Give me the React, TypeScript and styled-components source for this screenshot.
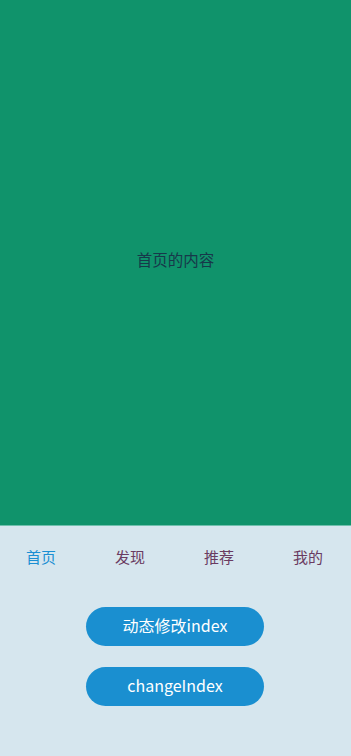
import React, { useState } from "react";
import styled, { createGlobalStyle } from "styled-components";

const tabs = ["首页", "发现", "推荐", "我的"];

const App: React.FC = () => {
  const [index, setIndex] = useState(0);

  return (
    <>
      <GlobalStyle />
      <Page>
        <Content>{tabs[index]}的内容</Content>
        <TabBar>
          {tabs.map((t, i) => (
            <Tab key={t} $active={i === index} onClick={() => setIndex(i)}>
              {t}
            </Tab>
          ))}
        </TabBar>
        <Actions>
          <PillButton onClick={() => setIndex((index + 1) % tabs.length)}>
            动态修改index
          </PillButton>
          <PillButton onClick={() => setIndex(0)}>changeIndex</PillButton>
        </Actions>
      </Page>
    </>
  );
};

const GlobalStyle = createGlobalStyle`
  html, body {
    margin: 0;
    padding: 0;
  }
  body {
    font-family: "Noto Sans CJK SC", "Noto Sans", Roboto, sans-serif;
    background: #d6e6ee;
  }
`;

const Page = styled.div`
  display: flex;
  flex-direction: column;
  width: 351px;
  height: 756px;
  background: #d6e6ee;
`;

const Content = styled.div`
  height: 526px;
  display: flex;
  align-items: center;
  justify-content: center;
  padding-bottom: 7px;
  background: #10936b;
  color: #17384a;
  font-size: 15.5px;
  border-bottom: 1px solid #6fc0ad;
  box-sizing: border-box;
`;

const TabBar = styled.div`
  display: flex;
  justify-content: space-between;
  align-items: center;
  height: 60px;
  padding: 0 28px 0 26px;
`;

const Tab = styled.div<{ $active: boolean }>`
  font-size: 15px;
  color: ${(p) => (p.$active ? "#1a8fd3" : "#6a3b61")};
  cursor: pointer;
`;

const Actions = styled.div`
  display: flex;
  flex-direction: column;
  align-items: center;
  gap: 21px;
  padding-top: 21px;
  padding-right: 1px;
`;

const PillButton = styled.button`
  width: 178px;
  height: 39px;
  padding: 0 0 3px;
  border: none;
  border-radius: 20px;
  background: #1a8fd0;
  color: #ffffff;
  font-family: "Noto Sans CJK SC", "Noto Sans", Roboto, sans-serif;
  font-size: 16px;
  cursor: pointer;
`;

export default App;
